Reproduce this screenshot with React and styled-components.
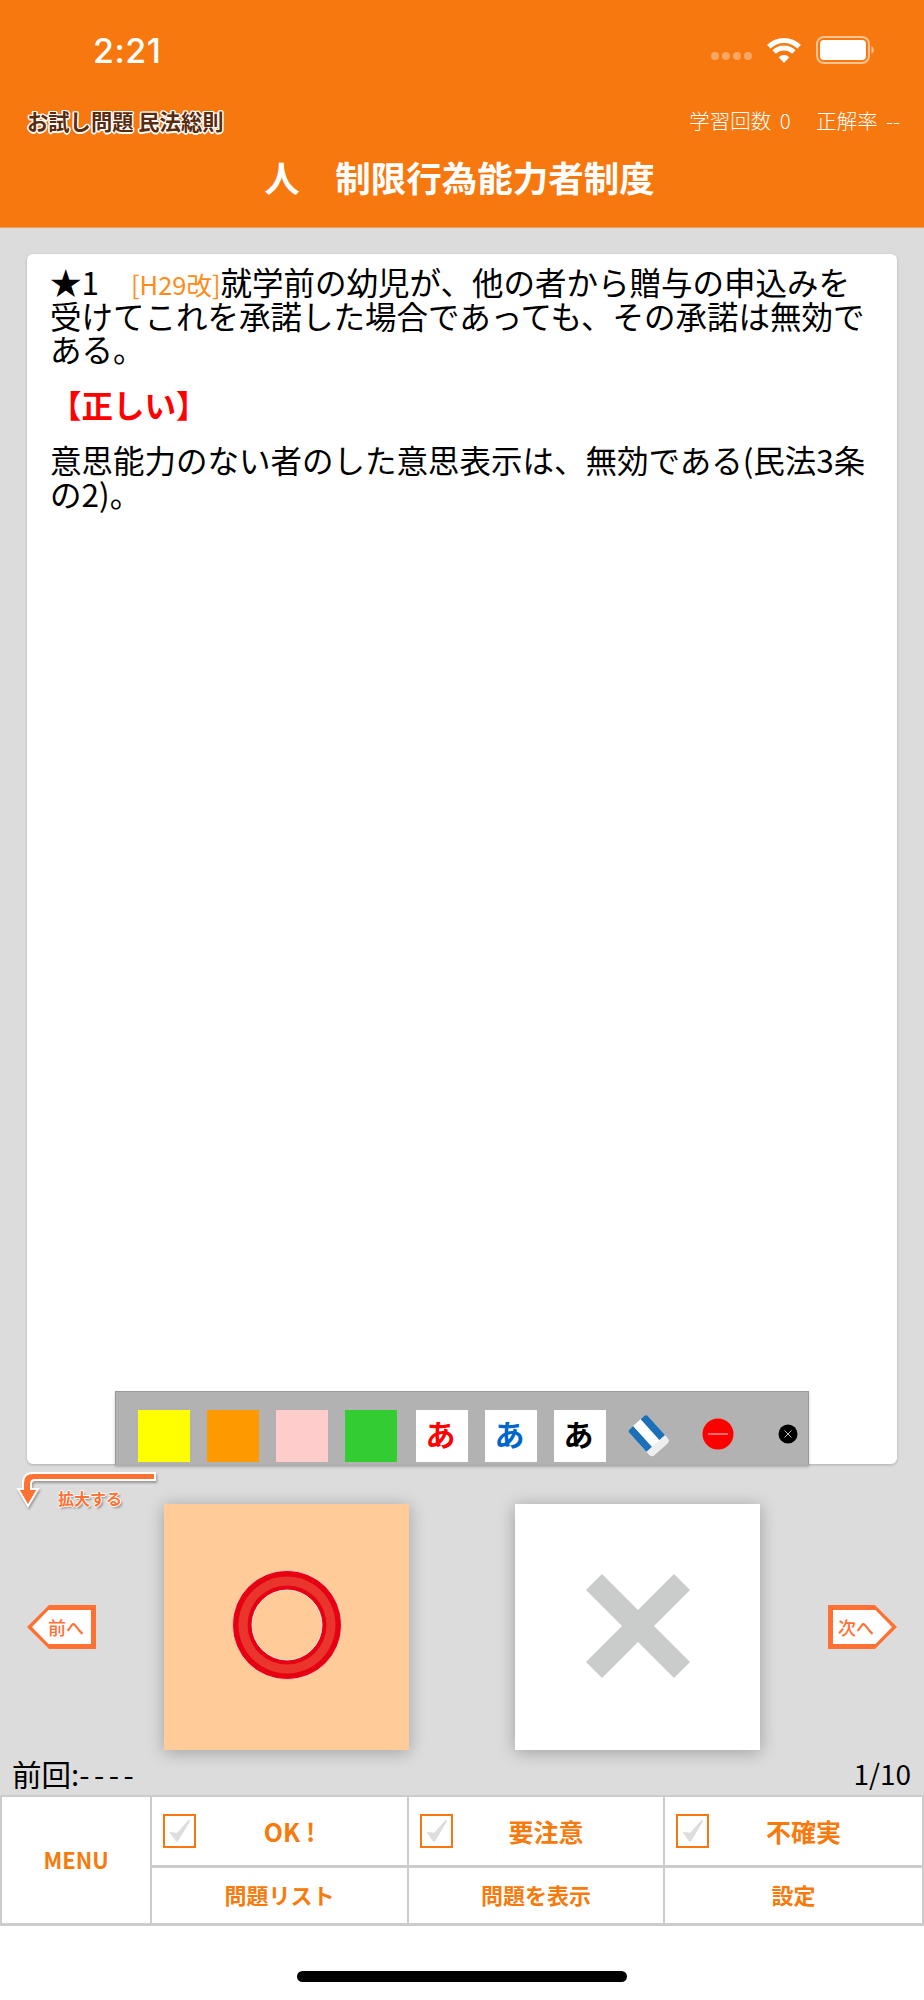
import styled, { createGlobalStyle } from "styled-components";

const ORANGE = "#f7780f";
const TAG = "#ff7033";
const LINE = "#cccccc";
const JP = `"Noto Sans CJK JP", "Noto Sans", sans-serif`;

const GlobalStyle = createGlobalStyle`
  html, body {
    margin: 0;
    padding: 0;
    background: #fff;
    font-family: ${JP};
  }
  * { box-sizing: border-box; }
`;

const Page = styled.div`
  width: 924px;
  height: 2000px;
  display: flex;
  flex-direction: column;
  overflow: hidden;
`;

// ヘッダー
const Header = styled.header`
  height: 228px;
  background: ${ORANGE};
  color: #fff;
  display: flex;
  flex-direction: column;
  border-bottom: 1px solid #e9a060;
`;

const StatusBar = styled.div`
  height: 100px;
  display: flex;
  align-items: center;
  padding: 0 49px 0 93px;
  justify-content: space-between;
`;

const Clock = styled.div`
  font-family: Inter, "Liberation Sans", sans-serif;
  font-size: 34px;
  font-weight: 500;
  letter-spacing: 0.5px;
`;

const StatusIcons = styled.div`
  display: flex;
  align-items: center;
  gap: 14px;
`;

const SignalDots = styled.div`
  display: flex;
  gap: 3px;
  align-self: flex-end;
  margin-bottom: 4px;
`;

const Dot = styled.span`
  width: 8px;
  height: 8px;
  border-radius: 50%;
  background: rgba(255, 255, 255, 0.35);
`;

const InfoRow = styled.div`
  display: flex;
  justify-content: space-between;
  align-items: center;
  padding: 0 24px 4px 27px;
  height: 44px;
`;

const Course = styled.div`
  font-size: 21.3px;
  font-weight: 700;
  color: #5a2a0c;
  white-space: pre;
  text-shadow: 1.5px 0 #fff, -1.5px 0 #fff, 0 1.5px #fff, 0 -1.5px #fff,
    1px 1px #fff, -1px -1px #fff, 1px -1px #fff, -1px 1px #fff;
`;

const Stats = styled.div`
  font-size: 20.5px;
  font-weight: 300;
  white-space: pre;
  word-spacing: 4px;
`;

const Title = styled.h1`
  margin: 0;
  text-align: center;
  font-size: 35.5px;
  font-weight: 700;
  line-height: 48px;
  padding: 9px 5px 0 0;
  white-space: pre;
`;

// 本体
const Main = styled.main`
  position: relative;
  height: 1567px;
  background: #dcdcdc;
  padding-top: 26px;
  display: flex;
  flex-direction: column;
`;

const Card = styled.section`
  position: relative;
  height: 1210px;
  margin: 0 27px;
  padding: 11px 20px 0 23px;
  background: #fff;
  border-radius: 6px;
  box-shadow: 0 1px 3px rgba(0, 0, 0, 0.2);
  font-size: 31.5px;
  line-height: 33.5px;
  color: #000;
`;

const Para = styled.p`
  margin: 0 0 22px;
  color: ${(p) => p.$color || "#000"};
  font-weight: ${(p) => (p.$bold ? 700 : 400)};
`;

const Line = styled.span`
  display: block;
  white-space: nowrap;
`;

const Year = styled.span`
  color: #ff8c1a;
  font-size: 25.5px;
  font-weight: 400;
  line-height: 1;
  margin-left: 32px;
`;

const Toolbar = styled.div`
  position: absolute;
  left: 88px;
  bottom: -1px;
  width: 694px;
  height: 74px;
  background: #b2b2b2;
  border: 1px solid #999;
  border-bottom: none;
  box-shadow: 0 2px 3px rgba(0, 0, 0, 0.2);
  display: flex;
  align-items: center;
  padding: 17px 0 3px 22px;
  gap: 17px;
`;

const Swatch = styled.div`
  width: 52px;
  height: 52px;
  background: ${(p) => p.$color};
`;

const Letter = styled(Swatch)`
  background: #fff;
  color: ${(p) => p.$color};
  font-size: 30px;
  font-weight: 700;
  line-height: 47px;
  padding-right: 3px;
  text-align: center;
  margin-left: ${(p) => (p.$first ? 2 : 0)}px;
`;

const ToolIcon = styled.svg`
  flex: none;
  display: block;
  margin-left: ${(p) => p.$left}px;
  margin-bottom: ${(p) => p.$up || 0}px;
`;

const ExpandHint = styled.div`
  position: absolute;
  left: 16px;
  top: 1243px;
  width: 141px;
  height: 40px;
`;

const ExpandArrow = styled.svg`
  display: block;
  filter: drop-shadow(1px 2px 1px rgba(0, 0, 0, 0.3));
`;

const ExpandLabel = styled.span`
  position: absolute;
  left: 42px;
  top: 16px;
  font-size: 16px;
  line-height: 22px;
  font-weight: 700;
  color: ${TAG};
  white-space: nowrap;
  text-shadow: 1px 0 #fff, -1px 0 #fff, 0 1px #fff, 0 -1px #fff,
    2px 2px 2px rgba(0, 0, 0, 0.35);
`;

const AnswerRow = styled.div`
  display: flex;
  align-items: center;
  justify-content: space-between;
  margin: 40px 27px 0;
`;

const NavTag = styled.div`
  position: relative;
  width: 69px;
  height: 44px;
  background: ${TAG};
  clip-path: ${(p) =>
    p.$next
      ? "polygon(0 0, 68% 0, 100% 50%, 68% 100%, 0 100%)"
      : "polygon(32% 0, 100% 0, 100% 100%, 32% 100%, 0 50%)"};
  &::before {
    content: "";
    position: absolute;
    inset: 5px;
    background: #fff;
    clip-path: ${(p) =>
      p.$next
        ? "polygon(0 0, 72% 0, 100% 50%, 72% 100%, 0 100%)"
        : "polygon(28% 0, 100% 0, 100% 100%, 28% 100%, 0 50%)"};
  }
`;

const NavLabel = styled.span`
  position: absolute;
  top: 0;
  bottom: 0;
  display: flex;
  align-items: center;
  ${(p) => (p.$next ? "left: 10px;" : "right: 12px;")}
  font-size: 18px;
  font-weight: 500;
  color: ${TAG};
  white-space: nowrap;
`;

const Tiles = styled.div`
  display: flex;
  gap: 106px;
`;

const Tile = styled.div`
  width: 245px;
  height: 246px;
  display: flex;
  align-items: center;
  justify-content: center;
  background: ${(p) => p.$color};
  box-shadow: 0 2px 16px rgba(0, 0, 0, 0.28);
`;

const TileMark = styled.svg`
  display: block;
  margin-bottom: ${(p) => p.$up}px;
`;

const MetaRow = styled.div`
  margin-top: auto;
  height: 45px;
  padding: 0 13px 0 12px;
  display: flex;
  align-items: center;
  justify-content: space-between;
  font-size: 28px;
  font-weight: 400;
  color: #000;
`;

const PrevResult = styled.span`
  font-size: 29.5px;
`;

const Dashes = styled.span`
  letter-spacing: 4.5px;
`;

// 下部メニュー
const Menu = styled.nav`
  display: grid;
  grid-template-columns: 148px 257px 256px 259px;
  grid-template-rows: 68px 58px;
  background: #fff;
  border: 2px solid ${LINE};
  border-bottom-width: 3px;
  color: #f77a0c;
  font-weight: 700;
`;

const MenuCell = styled.div`
  display: flex;
  align-items: center;
  justify-content: center;
  font-size: ${(p) => p.$size || 22}px;
  border-left: ${(p) => (p.$first ? "none" : `2px solid ${LINE}`)};
  border-top: ${(p) => (p.$lower ? `3px solid ${LINE}` : "none")};
  ${(p) => p.$span && "grid-row: span 2;"}
  padding: ${(p) => (p.$check ? "0 24px 0 11px" : "0 0 3px")};
`;

const CheckBox = styled.span`
  flex: none;
  width: 33px;
  height: 34px;
  border: 2px solid ${ORANGE};
  display: flex;
  align-items: center;
  justify-content: center;
`;

const CheckLabel = styled.span`
  flex: 1;
  text-align: center;
  white-space: pre;
`;

const Home = styled.div`
  flex: 1;
  background: #fff;
  display: flex;
  justify-content: center;
  align-items: flex-end;
  padding-bottom: 18px;
`;

const HomeBar = styled.div`
  width: 330px;
  height: 11px;
  border-radius: 6px;
  background: #000;
`;

const Wifi = () => (
  <svg width="36" height="28" viewBox="0 0 36 28">
    <path d="M2.8 10.8 A21.5 21.5 0 0 1 33.2 10.8" fill="none" stroke="#fff" strokeWidth="5" />
    <path d="M8.1 16.1 A14 14 0 0 1 27.9 16.1" fill="none" stroke="#fff" strokeWidth="5" />
    <path d="M18 27 L12.7 21.3 A7.5 7.5 0 0 1 23.3 21.3 Z" fill="#fff" />
  </svg>
);

const Battery = () => (
  <svg width="59" height="28" viewBox="0 0 59 28">
    <rect x="1" y="1" width="52" height="26" rx="7" fill="none" stroke="#fff" strokeOpacity="0.55" strokeWidth="2" />
    <rect x="4" y="4" width="46" height="20" rx="4" fill="#fff" />
    <path d="M55.5 10 a4.5 4.5 0 0 1 0 8 z" fill="#fff" fillOpacity="0.55" />
  </svg>
);

const Eraser = () => (
  <ToolIcon $left={3} width="46" height="46" viewBox="0 0 46 46">
    <g transform="rotate(-42 23 23)">
      <rect x="10.5" y="5" width="25" height="36" rx="4" fill="#eeeeee" />
      <path d="M10.5 8 a3 3 0 0 1 3 -3 h4.5 v28 h-7.5 z" fill="#1b70b8" />
      <rect x="18" y="5" width="10" height="28" fill="#fff" />
      <path d="M28 5 h4.5 a3 3 0 0 1 3 3 v25 h-7.5 z" fill="#1b70b8" />
    </g>
  </ToolIcon>
);

const MinusDot = () => (
  <ToolIcon $left={13} $up={4} width="32" height="32" viewBox="0 0 32 32">
    <circle cx="16" cy="16" r="15.5" fill="#ff0000" />
    <rect x="6" y="15.4" width="20" height="1.2" fill="#ffb0b0" />
  </ToolIcon>
);

const CloseDot = () => (
  <ToolIcon $left={27} $up={4} width="20" height="20" viewBox="0 0 20 20">
    <circle cx="10" cy="10" r="9.5" fill="#000" />
    <path d="M6.5 6.5 L13.5 13.5 M13.5 6.5 L6.5 13.5" stroke="#bbb" strokeWidth="1" />
  </ToolIcon>
);

const Check = () => (
  <svg width="24" height="26" viewBox="0 0 24 26">
    <path d="M3 15 L9 23 L21 3 L9.5 16 Z" fill="#dddddd" stroke="#dddddd" strokeWidth="2" strokeLinejoin="round" />
  </svg>
);

export default function App() {
  return (
    <Page>
      <GlobalStyle />
      <Header>
        <StatusBar>
          <Clock>2:21</Clock>
          <StatusIcons>
            <SignalDots>
              <Dot />
              <Dot />
              <Dot />
              <Dot />
            </SignalDots>
            <Wifi />
            <Battery />
          </StatusIcons>
        </StatusBar>
        <InfoRow>
          <Course>お試し問題 民法総則</Course>
          <Stats>学習回数 0   正解率 --</Stats>
        </InfoRow>
        <Title>人　制限行為能力者制度</Title>
      </Header>

      <Main>
        <Card>
          <Para>
            <Line>
              ★1<Year>[H29改]</Year>就学前の幼児が、他の者から贈与の申込みを
            </Line>
            <Line>受けてこれを承諾した場合であっても、その承諾は無効で</Line>
            <Line>ある。</Line>
          </Para>
          <Para $color="#ff0000" $bold>
            【正しい】
          </Para>
          <Para>
            <Line>意思能力のない者のした意思表示は、無効である(民法3条</Line>
            <Line>の2)。</Line>
          </Para>
          <Toolbar>
            <Swatch $color="#ffff00" />
            <Swatch $color="#ff9900" />
            <Swatch $color="#ffcccc" />
            <Swatch $color="#33cc33" />
            <Letter $first $color="#ff0000">あ</Letter>
            <Letter $color="#0066cc">あ</Letter>
            <Letter $color="#000000">あ</Letter>
            <Eraser />
            <MinusDot />
            <CloseDot />
          </Toolbar>
        </Card>

        <ExpandHint>
          <ExpandArrow width="141" height="38" viewBox="0 0 141 38">
            <path
              d="M139 2 H17 Q7 2 7 12 V18 H2 L12 35 L22 18 H15 V13 Q15 9 19 9 H139 Z"
              fill={TAG}
              stroke="#fff"
              strokeWidth="2"
            />
          </ExpandArrow>
          <ExpandLabel>拡大する</ExpandLabel>
        </ExpandHint>

        <AnswerRow>
          <NavTag>
            <NavLabel>前へ</NavLabel>
          </NavTag>
          <Tiles>
            <Tile $color="#ffcc99">
              <TileMark $up={4} width="112" height="112" viewBox="0 0 112 112">
                <circle cx="56" cy="56" r="54.5" fill="#e60012" stroke="#fff" strokeWidth="0.6" />
                <circle cx="56" cy="56" r="48.5" fill="#ea352d" />
                <circle cx="56" cy="56" r="39.5" fill="#e60012" />
                <circle cx="56" cy="56" r="35" fill="#ffcc99" stroke="#fff" strokeWidth="0.8" />
              </TileMark>
            </Tile>
            <Tile $color="#ffffff">
              <TileMark $up={2} width="104" height="104" viewBox="0 0 104 104">
                <path
                  d="M16 0 L52 36 L88 0 L104 16 L68 52 L104 88 L88 104 L52 68 L16 104 L0 88 L36 52 L0 16 Z"
                  fill="#cacccb"
                />
              </TileMark>
            </Tile>
          </Tiles>
          <NavTag $next>
            <NavLabel $next>次へ</NavLabel>
          </NavTag>
        </AnswerRow>

        <MetaRow>
          <PrevResult>
            前回:<Dashes>----</Dashes>
          </PrevResult>
          <span>1/10</span>
        </MetaRow>
      </Main>

      <Menu>
        <MenuCell $first $span>
          MENU
        </MenuCell>
        <MenuCell $check $size={25}>
          <CheckBox>
            <Check />
          </CheckBox>
          <CheckLabel>OK !</CheckLabel>
        </MenuCell>
        <MenuCell $check $size={25}>
          <CheckBox>
            <Check />
          </CheckBox>
          <CheckLabel>要注意</CheckLabel>
        </MenuCell>
        <MenuCell $check $size={25}>
          <CheckBox>
            <Check />
          </CheckBox>
          <CheckLabel>不確実</CheckLabel>
        </MenuCell>
        <MenuCell $lower>問題リスト</MenuCell>
        <MenuCell $lower>問題を表示</MenuCell>
        <MenuCell $lower>設定</MenuCell>
      </Menu>

      <Home>
        <HomeBar />
      </Home>
    </Page>
  );
}
